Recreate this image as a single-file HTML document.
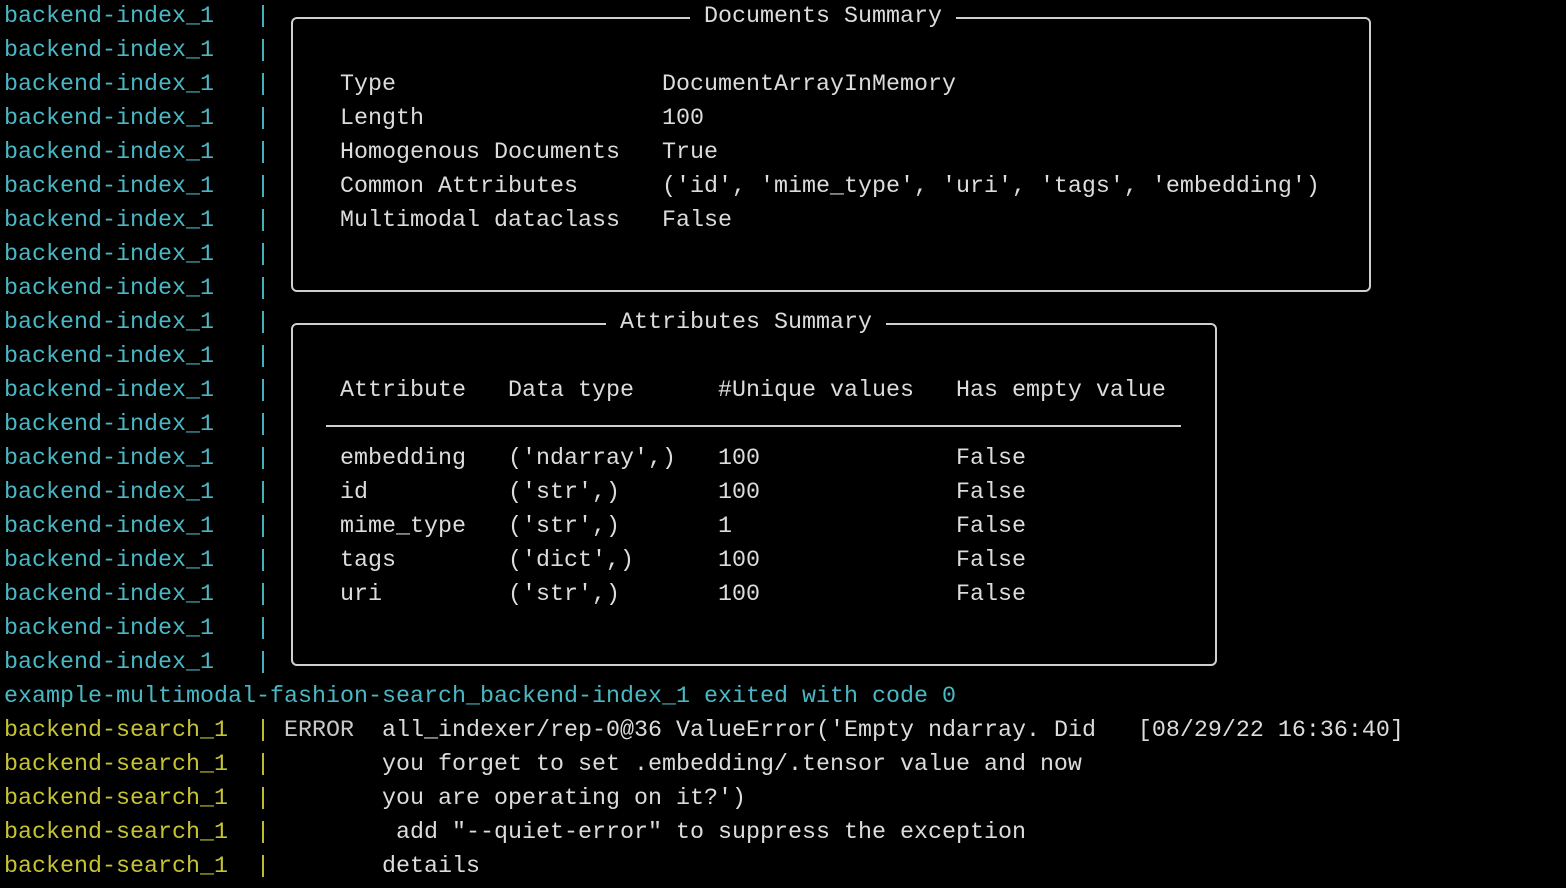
<!DOCTYPE html>
<html><head><meta charset="utf-8"><style>
html,body{margin:0;padding:0;background:#000;width:1566px;height:888px;overflow:hidden}
pre{position:absolute;left:4px;top:0;margin:0;font-family:"Liberation Mono",monospace;font-size:23.33px;line-height:34px;color:#dcdcdc;z-index:2}
.c{color:#4ab8c4}.y{color:#c6c434}.g{color:#c8c8c8}
.t{background:#000}
.box{position:absolute;border:2px solid #cfcfcf;border-radius:6px;z-index:1}
.sep{position:absolute;left:326px;width:855px;top:425px;height:2px;background:#cfcfcf;z-index:1}
</style></head><body>
<div class="box" style="left:291px;top:17px;width:1076px;height:271px"></div>
<div class="box" style="left:291px;top:323px;width:922px;height:339px"></div>
<div class="sep"></div>
<pre><span class="c">backend-index_1   |</span>                              <span class="t"> Documents Summary </span>
<span class="c">backend-index_1   |</span>
<span class="c">backend-index_1   |</span>     Type                   DocumentArrayInMemory
<span class="c">backend-index_1   |</span>     Length                 100
<span class="c">backend-index_1   |</span>     Homogenous Documents   True
<span class="c">backend-index_1   |</span>     Common Attributes      ('id', 'mime_type', 'uri', 'tags', 'embedding')
<span class="c">backend-index_1   |</span>     Multimodal dataclass   False
<span class="c">backend-index_1   |</span>
<span class="c">backend-index_1   |</span>
<span class="c">backend-index_1   |</span>                        <span class="t"> Attributes Summary </span>
<span class="c">backend-index_1   |</span>
<span class="c">backend-index_1   |</span>     Attribute   Data type      #Unique values   Has empty value
<span class="c">backend-index_1   |</span>
<span class="c">backend-index_1   |</span>     embedding   ('ndarray',)   100              False
<span class="c">backend-index_1   |</span>     id          ('str',)       100              False
<span class="c">backend-index_1   |</span>     mime_type   ('str',)       1                False
<span class="c">backend-index_1   |</span>     tags        ('dict',)      100              False
<span class="c">backend-index_1   |</span>     uri         ('str',)       100              False
<span class="c">backend-index_1   |</span>
<span class="c">backend-index_1   |</span>
<span class="c">example-multimodal-fashion-search_backend-index_1 exited with code 0</span>
<span class="y">backend-search_1  |</span> <span class="g">ERROR</span>  all_indexer/rep-0@36 ValueError('Empty ndarray. Did   [08/29/22 16:36:40]
<span class="y">backend-search_1  |</span>        you forget to set .embedding/.tensor value and now
<span class="y">backend-search_1  |</span>        you are operating on it?')
<span class="y">backend-search_1  |</span>         add "--quiet-error" to suppress the exception
<span class="y">backend-search_1  |</span>        details</pre>
</body></html>
